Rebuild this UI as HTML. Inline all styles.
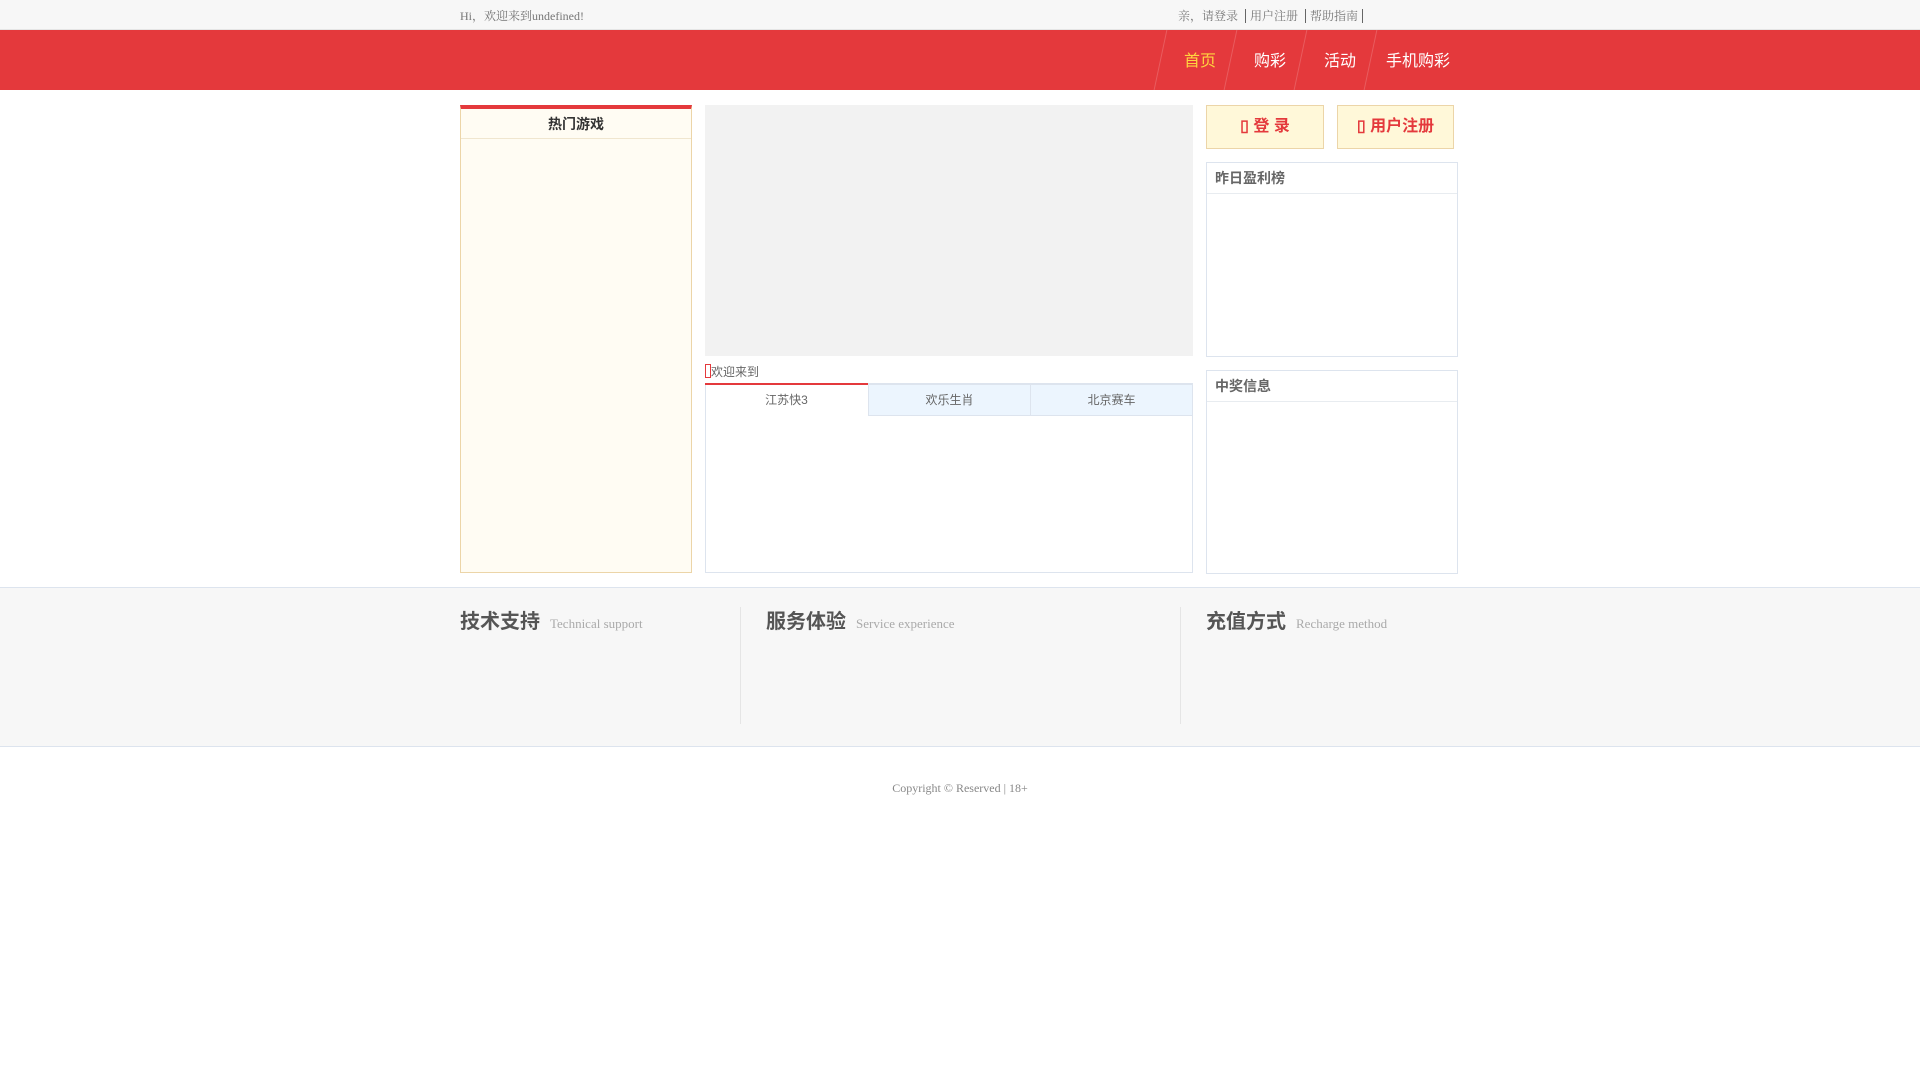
<!DOCTYPE html>
<html><head><meta charset="utf-8"><style>
*{margin:0;padding:0;box-sizing:border-box}
body{width:1920px;height:1080px;background:#fff;font-family:"Liberation Serif","Noto Serif CJK SC","Noto Sans CJK SC",serif;color:#666;position:relative;overflow:hidden}
.a{position:absolute}
.top{left:0;top:0;width:1920px;height:30px;background:#f7f7f7;border-bottom:1px solid #e5e5e5;font-size:12px}
.hdr{left:0;top:30px;width:1920px;height:60px;background:#e4393c}
.nav{color:#fff;font-family:"Liberation Sans","Noto Sans CJK SC",sans-serif;font-size:16px;top:47px}
.sl{top:30px;width:1px;height:60px;background:rgba(255,255,255,.18);transform:skewX(-12deg)}
.box{border:1px solid #dde4ee}
.cj{font-family:"Liberation Sans","Noto Sans CJK SC",sans-serif}
</style></head><body>
<div class="a top"><span class="a" style="left:460px;top:7px;color:#777">Hi，欢迎来到undefined!</span>
<span class="a" style="left:1178px;top:7px;color:#777">亲，请登录 <span style="border-left:1px solid #666;margin:0 4px"></span>用户注册 <span style="border-left:1px solid #666;margin:0 4px"></span>帮助指南 <span style="border-left:1px solid #666;margin:0 4px"></span></span></div>
<div class="a hdr"></div>
<div class="a sl" style="left:1160px"></div><div class="a sl" style="left:1230px"></div><div class="a sl" style="left:1300px"></div><div class="a sl" style="left:1370px"></div>
<span class="a nav" style="left:1184px;color:#ffd53f">首页</span>
<span class="a nav" style="left:1254px">购彩</span>
<span class="a nav" style="left:1324px">活动</span>
<span class="a nav" style="left:1386px">手机购彩</span>

<div class="a" style="left:460px;top:105px;width:232px;height:468px;background:#fffcf3;border:1px solid #ecd5a8;border-top:4px solid #e4393c"></div>
<div class="a cj" style="left:461px;top:109px;width:230px;height:30px;border-bottom:1px solid #f0e6cf;text-align:center;line-height:30px;font-size:14px;font-weight:bold;color:#333">热门游戏</div>

<div class="a" style="left:705px;top:105px;width:488px;height:251px;background:#f2f2f2"></div>
<div class="a cj" style="left:705px;top:363px;font-size:12px;color:#666"><span style="display:inline-block;width:6px;height:14px;border:1px solid #e4393c;vertical-align:-2px"></span>欢迎来到</div>
<div class="a box" style="left:705px;top:383px;width:488px;height:190px"></div>
<div class="a" style="left:705px;top:383px;width:163px;height:2px;background:#e4393c"></div>
<div class="a cj" style="left:705px;top:385px;width:163px;height:31px;text-align:center;line-height:31px;font-size:12px">江苏快3</div>
<div class="a cj box" style="left:868px;top:384px;width:163px;height:32px;background:#ecf5fe;text-align:center;line-height:31px;font-size:12px">欢乐生肖</div>
<div class="a cj box" style="left:1030px;top:384px;width:163px;height:32px;background:#ecf5fe;text-align:center;line-height:31px;font-size:12px">北京赛车</div>

<div class="a cj" style="left:1206px;top:105px;width:118px;height:44px;background:#fff8d9;border:1px solid #ecd5a8;color:#e4393c;font-size:16px;font-weight:bold;text-align:center;line-height:42px">▯ 登 录</div>
<div class="a cj" style="left:1337px;top:105px;width:117px;height:44px;background:#fff8d9;border:1px solid #ecd5a8;color:#e4393c;font-size:16px;font-weight:bold;text-align:center;line-height:42px">▯ 用户注册</div>
<div class="a box" style="left:1206px;top:162px;width:252px;height:195px"></div>
<div class="a cj" style="left:1207px;top:163px;width:250px;height:31px;border-bottom:1px solid #e8ecf0;padding-left:8px;line-height:30px;font-size:14px;font-weight:bold">昨日盈利榜</div>
<div class="a box" style="left:1206px;top:370px;width:252px;height:204px"></div>
<div class="a cj" style="left:1207px;top:371px;width:250px;height:31px;border-bottom:1px solid #e8ecf0;padding-left:8px;line-height:30px;font-size:14px;font-weight:bold">中奖信息</div>

<div class="a" style="left:0;top:587px;width:1920px;height:160px;background:#f7f7f7;border-top:1px solid #dde4ee;border-bottom:1px solid #dde4ee"></div>
<div class="a" style="left:740px;top:607px;width:1px;height:117px;background:#e5e5e5"></div>
<div class="a" style="left:1180px;top:607px;width:1px;height:117px;background:#e5e5e5"></div>
<div class="a" style="left:460px;top:605px;font-size:13px;color:#aaa"><b class="cj" style="font-size:20px;color:#555;margin-right:10px">技术支持</b>Technical support</div>
<div class="a" style="left:766px;top:605px;font-size:13px;color:#aaa"><b class="cj" style="font-size:20px;color:#555;margin-right:10px">服务体验</b>Service experience</div>
<div class="a" style="left:1206px;top:605px;font-size:13px;color:#aaa"><b class="cj" style="font-size:20px;color:#555;margin-right:10px">充值方式</b>Recharge method</div>
<div class="a" style="left:0;top:781px;width:1920px;text-align:center;font-size:12px;color:#888">Copyright © Reserved | 18+</div>
</body></html>
